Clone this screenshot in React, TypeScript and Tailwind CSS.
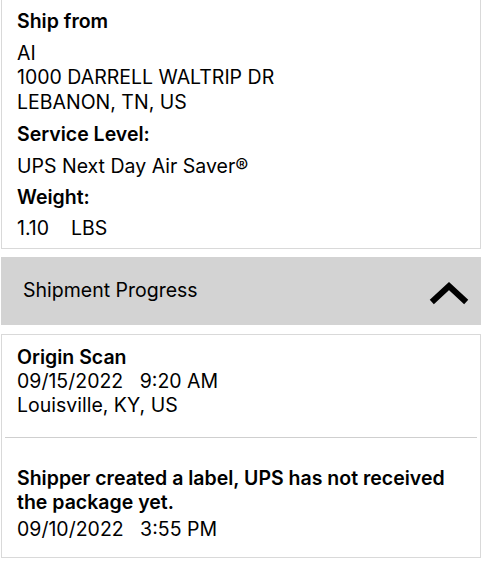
import React from "react";

export default function App() {
  const font = { fontFamily: "Inter, 'Liberation Sans', sans-serif" };
  return (
    <div className="w-[486px] h-[562px] bg-white text-black overflow-hidden" style={font}>
      <div className="ml-px w-[480px]">
        <div className="border-x border-b border-[#d9d9d9] pl-[15px] pr-4 pt-[9px] pb-[8px] text-[19.5px] leading-[24.5px]">
          <div className="font-semibold mb-[7px]">Ship from</div>
          <div className="mb-[8px]">
            <div>AI</div>
            <div>1000 DARRELL WALTRIP DR</div>
            <div>LEBANON, TN, US</div>
          </div>
          <div className="font-semibold mb-[7px]">Service Level:</div>
          <div className="mb-[7px]">UPS Next Day Air Saver®</div>
          <div className="font-semibold mb-[6px]">Weight:</div>
          <div>1.10&nbsp;&nbsp;&nbsp;&nbsp;LBS</div>
        </div>
        <div className="mt-[8px] h-[68px] bg-[#d3d3d3] flex items-center justify-between pl-[22px] pr-[12px]">
          <span className="text-[19.5px]">Shipment Progress</span>
          <svg width="40" height="26" viewBox="0 0 40 26" className="mt-[1px]">
            <path d="M5 21 L20 7 L35 21" fill="none" stroke="#000" strokeWidth="6" strokeLinecap="square" />
          </svg>
        </div>
        <div className="mt-[9px] border border-[#d9d9d9] text-[19.5px] leading-[24px]">
          <div className="pl-[15px] pt-[10px] pb-[20px]">
            <div className="font-semibold">Origin Scan</div>
            <div>09/15/2022&nbsp;&nbsp;&nbsp;9:20 AM</div>
            <div>Louisville, KY, US</div>
          </div>
          <div className="mx-[3px] h-px bg-[#cfcfcf]" />
          <div className="pl-[15px] pr-2 pt-[28px] pb-[16px]">
            <div className="font-semibold">Shipper created a label, UPS has not received the package yet.</div>
            <div className="mt-[3px]">09/10/2022&nbsp;&nbsp;&nbsp;3:55 PM</div>
          </div>
        </div>
      </div>
    </div>
  );
}
